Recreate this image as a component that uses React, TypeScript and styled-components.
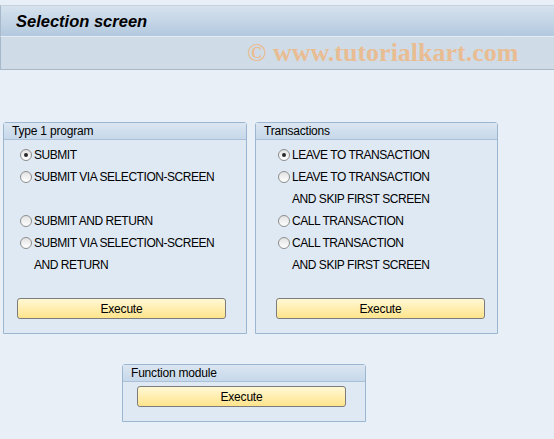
import React from 'react';
import styled, { createGlobalStyle } from 'styled-components';

const GlobalStyle = createGlobalStyle`
    html, body {
        margin: 0;
        padding: 0;
        background: #e9eff7;
        font-family: Tahoma, "Liberation Sans", Arial, sans-serif;
    }
`

const Page = styled.div`
    width: 554px;
    height: 439px;
    overflow: hidden;
    background: #e9eff7;
`

const TitleBar = styled.div`
    margin-top: 5px;
    height: 30px;
    display: flex;
    align-items: center;
    padding-left: 15px;
    background: linear-gradient(#d6e2ee, #b3c9df);
    border-left: 1px solid #a6b8ca;
    border-top: 1px solid #c5d3e1;
    font-family: "Liberation Sans", Arial, sans-serif;
    font-weight: bold;
    font-style: italic;
    font-size: 16.5px;
    color: #000;
`

const SubBar = styled.div`
    height: 32px;
    display: flex;
    align-items: center;
    padding-left: 246px;
    background: #cfdce8;
    border-left: 1px solid #a6b8ca;
    border-top: 1px solid #e4ecf4;
    border-bottom: 1px solid #a8b8c8;
`

const Watermark = styled.span`
    font-family: "Liberation Serif", "Times New Roman", serif;
    font-weight: bold;
    font-size: 26px;
    color: #e9bd93;
`

const GroupRow = styled.div`
    display: flex;
    gap: 8px;
    margin: 52px 0 0 3px;
`

const Group = styled.div<{ $width: number }>`
    width: ${p => p.$width}px;
    box-sizing: border-box;
    border: 1px solid #9bb6d1;
    border-radius: 3px 3px 0 0;
    background: #dfe9f4;
    display: flex;
    flex-direction: column;
`

const GroupTitle = styled.div`
    height: 16px;
    line-height: 16px;
    padding-left: 8px;
    font-size: 12px;
    letter-spacing: -0.2px;
    color: #000;
    background: linear-gradient(#dbe6f1, #c6d8ea);
    border-bottom: 1px solid #a9c0d7;
`

const GroupBody = styled.div<{ $padLeft: number }>`
    padding: 4px 0 14px ${p => p.$padLeft}px;
    display: flex;
    flex-direction: column;
`

const Option = styled.div`
    height: 22px;
    display: flex;
    align-items: center;
    font-size: 12px;
    letter-spacing: -0.45px;
    color: #000;
`

const Radio = styled.span<{ $checked?: boolean }>`
    width: 10px;
    height: 10px;
    border-radius: 50%;
    border: 1px solid #8d8d8d;
    background: linear-gradient(#e2e2e2, #ffffff);
    margin-right: 2px;
    display: flex;
    align-items: center;
    justify-content: center;
    &::after {
        content: '';
        width: 4px;
        height: 4px;
        border-radius: 50%;
        background: #2a2a2a;
        display: ${p => (p.$checked ? 'block' : 'none')};
    }
`

const Continuation = styled.span`
    padding-left: 14px;
`

const ExecuteButton = styled.button<{ $top: number; $shift?: number }>`
    margin-top: ${p => p.$top}px;
    margin-left: ${p => p.$shift ?? 0}px;
    width: 209px;
    height: 21px;
    box-sizing: border-box;
    border: 1px solid #7c7c7c;
    border-radius: 3px;
    background: linear-gradient(#fff8d4, #ffe48c);
    font-family: Tahoma, "Liberation Sans", Arial, sans-serif;
    font-size: 12px;
    letter-spacing: -0.2px;
    color: #000;
    padding: 0;
`

const ModuleRow = styled.div`
    margin: 30px 0 0 122px;
`

function App() {
    return (
        <Page>
            <GlobalStyle />
            <TitleBar>Selection screen</TitleBar>
            <SubBar>
                <Watermark>© www.tutorialkart.com</Watermark>
            </SubBar>

            <GroupRow>
                <Group $width={244}>
                    <GroupTitle>Type 1 program</GroupTitle>
                    <GroupBody $padLeft={16}>
                        <Option><Radio $checked />SUBMIT</Option>
                        <Option><Radio />SUBMIT VIA SELECTION-SCREEN</Option>
                        <Option />
                        <Option><Radio />SUBMIT AND RETURN</Option>
                        <Option><Radio />SUBMIT VIA SELECTION-SCREEN</Option>
                        <Option><Continuation>AND RETURN</Continuation></Option>
                        <ExecuteButton $top={22} $shift={-3}>Execute</ExecuteButton>
                    </GroupBody>
                </Group>

                <Group $width={243}>
                    <GroupTitle>Transactions</GroupTitle>
                    <GroupBody $padLeft={22}>
                        <Option><Radio $checked />LEAVE TO TRANSACTION</Option>
                        <Option><Radio />LEAVE TO TRANSACTION</Option>
                        <Option><Continuation>AND SKIP FIRST SCREEN</Continuation></Option>
                        <Option><Radio />CALL TRANSACTION</Option>
                        <Option><Radio />CALL TRANSACTION</Option>
                        <Option><Continuation>AND SKIP FIRST SCREEN</Continuation></Option>
                        <ExecuteButton $top={22} $shift={-2}>Execute</ExecuteButton>
                    </GroupBody>
                </Group>
            </GroupRow>

            <ModuleRow>
                <Group $width={244}>
                    <GroupTitle>Function module</GroupTitle>
                    <GroupBody $padLeft={14}>
                        <ExecuteButton $top={0}>Execute</ExecuteButton>
                    </GroupBody>
                </Group>
            </ModuleRow>
        </Page>
    );
}

export default App;
